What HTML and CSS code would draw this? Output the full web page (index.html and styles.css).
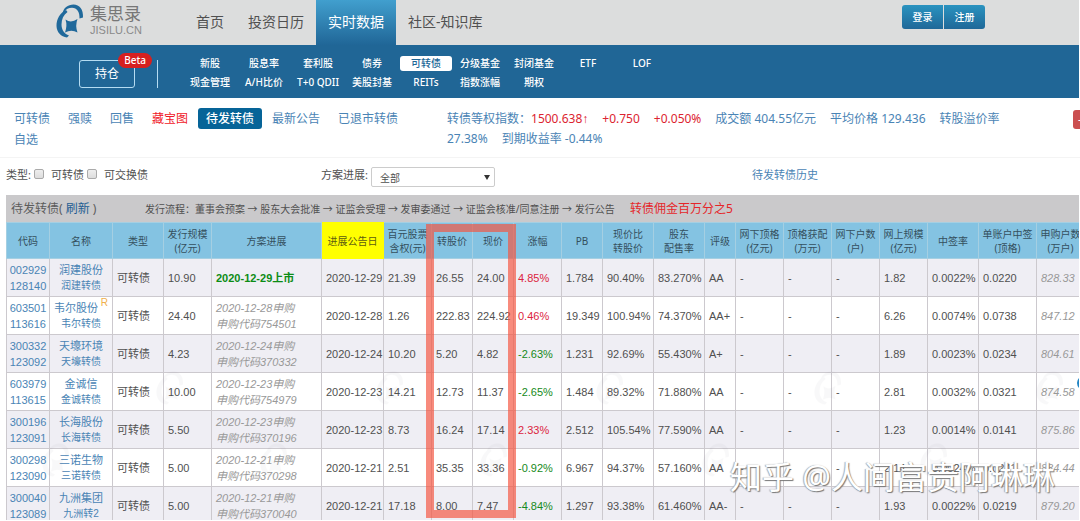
FILE: index.html
```html
<!DOCTYPE html>
<html lang="zh-CN">
<head>
<meta charset="utf-8">
<title>待发转债 - 集思录</title>
<link rel="stylesheet" href="styles.css">
</head>
<body>
<svg class="defs" width="0" height="0" aria-hidden="true">
  <symbol id="mark" viewBox="0 0 28 34">
    <path d="M6.500 10C7 4 12 .5 17.500 .5 23.500 .5 27.500 5.500 27 13.500L23.500 14.500C23.800 8 21 3.800 16 3.800 12.500 3.800 10 5 8.500 8z"/>
    <path d="M10 6C4 9 .3 15 .5 22 .7 28 5 33 11 33.500L13 31.500C8.500 30 5.500 26 5.500 20.500 5.500 15 7.500 11 11.500 8z"/>
    <path d="M9.500 15.500Q15 19.500 21.500 15Q19 21.500 21.500 28.500Q15.500 25 9 28.500Q11.500 21.500 9.500 15.500z"/>
  </symbol>
</svg>
<header class="top">
  <a class="brand" href="#">
    <svg class="brand-icon"><use href="#mark"/></svg>
    <span class="brand-text"><span class="brand-name">集思录</span><span class="brand-url">JISILU.CN</span></span>
  </a>
  <nav class="main-nav">
    <a href="#">首页</a><a href="#">投资日历</a><a href="#" class="current">实时数据</a><a href="#">社区-知识库</a>
  </nav>
  <div class="account"><button type="button">登录</button><button type="button">注册</button></div>
</header>
<div class="sub">
  <button type="button" class="hold">持仓<span class="beta">Beta</span></button>
  <nav class="sub-nav">
    <a href="#">新股</a><a href="#">股息率</a><a href="#">套利股</a><a href="#">债券</a><a href="#" class="current">可转债</a><a href="#">分级基金</a><a href="#">封闭基金</a><a href="#">ETF</a><a href="#">LOF</a>
    <a href="#">现金管理</a><a href="#">A/H比价</a><a href="#">T+0 QDII</a><a href="#">美股封基</a><a href="#">REITs</a><a href="#">指数涨幅</a><a href="#">期权</a>
  </nav>
</div>
<section class="info">
  <nav class="tabs">
    <a href="#">可转债</a><a href="#">强赎</a><a href="#">回售</a><a href="#" class="hot">藏宝图</a><a href="#" class="current">待发转债</a><a href="#">最新公告</a><a href="#">已退市转债</a><a href="#">自选</a>
  </nav>
  <p class="stats">
    <span>转债等权指数：<b>1500.638<i class="arrow">↑</i></b></span>
    <b>+0.750</b>
    <b>+0.050%</b>
    <span>成交额 404.55亿元</span>
    <span>平均价格 129.436</span>
    <span>转股溢价率</span>
    <span>27.38%</span>
    <span>到期收益率 -0.44%</span>
  </p>
  <button type="button" class="edge" aria-label="-">-</button>
</section>
<form class="filters">
  <div class="kinds">
    <span>类型:</span>
    <label><input type="checkbox">可转债</label>
    <label><input type="checkbox">可交换债</label>
  </div>
  <div class="progress">
    <label for="progress">方案进展:</label>
    <span class="select"><select id="progress"><option>全部</option></select></span>
  </div>
  <a href="#">待发转债历史</a>
</form>
<main class="board">
  <div class="caption">
    <span class="caption-title">待发转债( <a href="#">刷新</a> )</span>
    <span class="flow">发行流程：董事会预案 → 股东大会批准 → 证监会受理 → 发审委通过 → 证监会核准/同意注册 → 发行公告</span>
    <span class="promo">转债佣金百万分之5</span>
  </div>
  <table>
    <colgroup>
      <col class="w43"><col class="w63"><col class="w51"><col class="w48"><col class="w110"><col class="w62"><col class="w48"><col class="w41"><col class="w41"><col class="w48"><col class="w41"><col class="w51"><col class="w51"><col class="w31"><col class="w48"><col class="w48"><col class="w48"><col class="w48"><col class="w51"><col class="w58"><col class="w48">
    </colgroup>
    <thead>
      <tr><th>代码</th><th>名称</th><th>类型</th><th>发行规模<br>(亿元)</th><th>方案进展</th><th class="sorted">进展公告日</th><th>百元股票<br>含权(元)</th><th>转股价</th><th>现价</th><th>涨幅</th><th>PB</th><th>现价比<br>转股价</th><th>股东<br>配售率</th><th>评级</th><th>网下顶格<br>(亿元)</th><th>顶格获配<br>(万元)</th><th>网下户数<br>(户)</th><th>网上规模<br>(亿元)</th><th>中签率</th><th>单账户中签<br>(顶格)</th><th>申购户数<br>(万户)</th></tr>
    </thead>
    <tbody>
      <tr><td class="id"><a href="#">002929</a><a href="#">128140</a></td><td class="name"><a href="#">润建股份</a><a href="#">润建转债</a></td><td>可转债</td><td>10.90</td><td class="listed">2020-12-29上市</td><td>2020-12-29</td><td>21.39</td><td>26.55</td><td>24.00</td><td class="up">4.85%</td><td>1.784</td><td>90.40%</td><td>83.270%</td><td>AA</td><td>-</td><td>-</td><td>-</td><td>1.82</td><td>0.0022%</td><td>0.0220</td><td class="est">828.33</td></tr>
      <tr><td class="id"><a href="#">603501</a><a href="#">113616</a></td><td class="name"><a href="#">韦尔股份<sup>R</sup></a><a href="#">韦尔转债</a></td><td>可转债</td><td>24.40</td><td class="est">2020-12-28申购<br>申购代码754501</td><td>2020-12-28</td><td>1.26</td><td>222.83</td><td>224.92</td><td class="up">0.46%</td><td>19.349</td><td>100.94%</td><td>74.370%</td><td>AA+</td><td>-</td><td>-</td><td>-</td><td>6.26</td><td>0.0074%</td><td>0.0738</td><td class="est">847.12</td></tr>
      <tr><td class="id"><a href="#">300332</a><a href="#">123092</a></td><td class="name"><a href="#">天壕环境</a><a href="#">天壕转债</a></td><td>可转债</td><td>4.23</td><td class="est">2020-12-24申购<br>申购代码370332</td><td>2020-12-24</td><td>10.20</td><td>5.20</td><td>4.82</td><td class="down">-2.63%</td><td>1.231</td><td>92.69%</td><td>55.430%</td><td>A+</td><td>-</td><td>-</td><td>-</td><td>1.89</td><td>0.0023%</td><td>0.0234</td><td class="est">804.61</td></tr>
      <tr><td class="id"><a href="#">603979</a><a href="#">113615</a></td><td class="name"><a href="#">金诚信</a><a href="#">金诚转债</a></td><td>可转债</td><td>10.00</td><td class="est">2020-12-23申购<br>申购代码754979</td><td>2020-12-23</td><td>14.21</td><td>12.73</td><td>11.37</td><td class="down">-2.65%</td><td>1.484</td><td>89.32%</td><td>71.880%</td><td>AA</td><td>-</td><td>-</td><td>-</td><td>2.81</td><td>0.0032%</td><td>0.0321</td><td class="est">874.58</td></tr>
      <tr><td class="id"><a href="#">300196</a><a href="#">123091</a></td><td class="name"><a href="#">长海股份</a><a href="#">长海转债</a></td><td>可转债</td><td>5.50</td><td class="est">2020-12-23申购<br>申购代码370196</td><td>2020-12-23</td><td>8.73</td><td>16.24</td><td>17.14</td><td class="up">2.33%</td><td>2.512</td><td>105.54%</td><td>77.590%</td><td>AA</td><td>-</td><td>-</td><td>-</td><td>1.23</td><td>0.0014%</td><td>0.0141</td><td class="est">875.86</td></tr>
      <tr><td class="id"><a href="#">300298</a><a href="#">123090</a></td><td class="name"><a href="#">三诺生物</a><a href="#">三诺转债</a></td><td>可转债</td><td>5.00</td><td class="est">2020-12-21申购<br>申购代码370298</td><td>2020-12-21</td><td>2.51</td><td>35.35</td><td>33.36</td><td class="down">-0.92%</td><td>6.967</td><td>94.37%</td><td>57.160%</td><td>AA</td><td>-</td><td>-</td><td>-</td><td>2.14</td><td>0.0024%</td><td>0.0241</td><td class="est">884.44</td></tr>
      <tr><td class="id"><a href="#">300040</a><a href="#">123089</a></td><td class="name"><a href="#">九洲集团</a><a href="#">九洲转2</a></td><td>可转债</td><td>5.00</td><td class="est">2020-12-21申购<br>申购代码370040</td><td>2020-12-21</td><td>17.18</td><td>8.00</td><td>7.47</td><td class="down">-4.84%</td><td>1.297</td><td>93.38%</td><td>61.460%</td><td>AA-</td><td>-</td><td>-</td><td>-</td><td>1.93</td><td>0.0022%</td><td>0.0219</td><td class="est">879.20</td></tr>
    </tbody>
  </table>
  <svg class="ghosts" aria-hidden="true">
    <use href="#mark" x="150" y="176" width="28" height="34"/>
    <use href="#mark" x="370" y="176" width="28" height="34"/>
    <use href="#mark" x="590" y="176" width="28" height="34"/>
    <use href="#mark" x="808" y="176" width="28" height="34"/>
    <use href="#mark" x="1030" y="176" width="28" height="34"/>
    <use href="#mark" x="36" y="248" width="28" height="34"/>
    <use href="#mark" x="254" y="248" width="28" height="34"/>
    <use href="#mark" x="474" y="248" width="28" height="34"/>
    <use href="#mark" x="696" y="248" width="28" height="34"/>
    <use href="#mark" x="914" y="248" width="28" height="34"/>
  </svg>
  <div class="highlight"></div>
  <span class="float-dot"></span>
</main>
<div class="signature">知乎 @人间富贵阿琳琳</div>
</body>
</html>
```
FILE: styles.css
```css
* { box-sizing: border-box; }

body {
  margin: 0;
  height: 100vh;
  overflow: hidden;
  position: relative;
  background: #fff;
  color: #505050;
  font: 12px/20px "Noto Sans", "Noto Sans CJK SC", sans-serif;
}

a { color: #4a84b5; text-decoration: none; }
button, input, select { font: inherit; margin: 0; }
.defs { position: absolute; }

/* header */
.top {
  display: flex;
  height: 45px;
  margin-right: 1px;
  padding-left: 56px;
  background: #dcdddd;
}
.brand { display: flex; width: 126px; gap: 6px; padding-top: 4px; }
.brand-icon { width: 28px; height: 34px; fill: #20699b; }
.brand-text { display: flex; flex-direction: column; color: #777; }
.brand-name { font-size: 17px; line-height: 20px; }
.brand-url { font: 11px/13px "Liberation Sans", sans-serif; color: #8a8a8a; }
.main-nav { display: flex; font-size: 14px; line-height: 43px; }
.main-nav a { padding: 0 12px; color: #505050; }
.main-nav a:first-child { padding-left: 14px; }
.main-nav .current { color: #fff; background: linear-gradient(#419fce, #206697); }
.account { display: flex; gap: 1px; margin: 5px 94px 0 auto; }
.account button {
  width: 41px;
  height: 24px;
  padding: 0;
  border: 0;
  border-radius: 3px 0 0 3px;
  color: #fff;
  font-size: 10px;
  font-weight: 500;
  background: linear-gradient(#2a93c0, #1f6898);
}
.account button + button { border-radius: 0 3px 3px 0; }

/* secondary navigation */
.sub {
  display: flex;
  height: 53px;
  margin-right: 1px;
  padding: 9px 0 0 79px;
  background: #206696;
}
.hold {
  position: relative;
  width: 56px;
  height: 28px;
  margin-top: 6px;
  padding: 0;
  border: 1px solid #b5dcf2;
  border-radius: 3px;
  background: none;
  color: #fff;
}
.beta {
  position: absolute;
  top: -8px;
  right: -18px;
  padding: 0 6px;
  border-radius: 8px;
  background: #d6201f;
  font-size: 10px;
  font-weight: 500;
  line-height: 15px;
}
.sub-nav {
  display: grid;
  grid-template-columns: repeat(9, 54px);
  grid-auto-rows: 19px;
  margin-left: 48px;
  font-size: 10px;
  line-height: 15px;
  text-align: center;
  position: relative;
}
.sub-nav::before {
  content: "";
  position: absolute;
  left: -26px;
  top: 6px;
  height: 28px;
  border-left: 1px solid #b5dcf2;
}
.sub-nav a { color: #fff; height: 15px; margin: 2px 1px; white-space: nowrap; font-weight: 500; }
.sub-nav .current { background: #fff; color: #206696; border-radius: 3px; }

/* tabs and index figures */
.info {
  display: flex;
  align-items: flex-start;
  height: 60px;
  padding: 10px 0 0 6px;
  border-bottom: 1px solid #f4f4f4;
}
.tabs { display: flex; flex-wrap: wrap; column-gap: 2px; width: 441px; }
.tabs a { padding: 0 8px; line-height: 21px; border-radius: 3px; }
.tabs .hot { color: #f01828; }
.tabs .current { background: #066498; color: #fff; font-weight: 500; }
.stats {
  display: flex;
  flex-wrap: wrap;
  column-gap: 14px;
  flex: 1;
  margin: 1px 0 0;
  padding-right: 60px;
  color: #4a84b5;
}
.stats b { font-weight: 400; color: #dc2430; }
.arrow { font-family: "Liberation Sans", sans-serif; font-style: normal; }
.edge {
  width: 20px;
  height: 19px;
  margin: 2px -13px 0 0;
  padding: 0 5px;
  border: 0;
  border-radius: 3px;
  background: #cb4f50;
  color: #fff;
  line-height: 19px;
  text-align: left;
}

/* filters */
.filters {
  display: flex;
  height: 37px;
  padding: 7px 0 0 6px;
  font-size: 11px;
}
.kinds { display: flex; width: 315px; gap: 3px; }
.kinds label { display: flex; }
.kinds input {
  appearance: none;
  width: 10px;
  height: 10px;
  margin: 4px 7px 0 0;
  border: 1px solid #aaa;
  border-radius: 2px;
  background: linear-gradient(#eee, #ddd);
}
.progress { display: flex; width: 431px; gap: 3px; }
.select { position: relative; height: 21px; margin-top: 2px; }
.select::after {
  content: "";
  position: absolute;
  right: 5px;
  top: 8px;
  border: 3px solid transparent;
  border-top: 5px solid #333;
  border-bottom: 0;
}
.select select {
  appearance: none;
  display: block;
  width: 124px;
  height: 20px;
  padding: 0 8px;
  border: 1px solid #ccc;
  border-radius: 2px;
  background: #fff;
  color: #505050;
  font-size: 10px;
}

/* bond table */
.board { position: relative; margin: 0 1px 0 6px; height: 325px; overflow: hidden; }
.caption {
  display: flex;
  align-items: center;
  height: 27px;
  padding-left: 5px;
  background: #cac9cb;
  white-space: nowrap;
}
.caption-title { width: 134px; color: #5c5c5c; }
.caption a { color: #1f5d92; }
.flow { width: 485px; font-size: 10px; }
.promo { color: #e52629; }

table { width: 100%; table-layout: fixed; border-collapse: collapse; }
.w31 { width: 31px; }
.w41 { width: 41px; }
.w43 { width: 43px; }
.w48 { width: 48px; }
.w51 { width: 51px; }
.w58 { width: 58px; }
.w62 { width: 62px; }
.w63 { width: 63px; }
.w110 { width: 110px; }
th {
  height: 36px;
  padding: 0;
  border: 1px solid #a5cfe2;
  background: #84c3e2;
  color: #34505e;
  font-size: 10px;
  font-weight: 400;
  line-height: 14px;
  white-space: nowrap;
}
th.sorted { background: #ff0; border-color: #ff0; color: #5c5c10; }
td {
  height: 38px;
  padding: 0 0 0 4px;
  border: 1px solid #ccc9ce;
  font: 11px/16px "Liberation Sans", "Noto Sans CJK SC", sans-serif;
  white-space: nowrap;
}
tbody tr:nth-child(odd) { background: #efeef4; }
td a { display: block; }
.id, .name { padding: 0; text-align: center; }
.name { position: relative; }
.name a + a { font-size: 10px; }
.name sup { position: absolute; right: 4px; top: -1px; color: #f0b04c; font-size: 10px; line-height: 14px; }
.name a:has(sup) { padding-right: 10px; }
.listed { color: #0c8c14; font-weight: 700; }
.est { color: #999; font-style: italic; }
.up { color: #dc2440; }
.down { color: #168a20; }

.ghosts {
  position: absolute;
  inset: 0;
  width: 100%;
  height: 100%;
  fill: #667;
  opacity: 0.04;
  pointer-events: none;
}
.highlight {
  position: absolute;
  left: 420px;
  top: 29px;
  width: 90px;
  height: 294px;
  border: 8px solid rgba(244, 84, 64, 0.68);
}
.float-dot {
  position: absolute;
  right: -12px;
  top: 181px;
  width: 14px;
  height: 14px;
  border-radius: 50%;
  background: #2385c4;
}
.signature {
  position: absolute;
  right: 25px;
  bottom: 21px;
  color: #fff;
  font-size: 32px;
  line-height: 46px;
  white-space: nowrap;
  text-shadow: 1px 1px 1px #777, -1px 0 1px #aaa;
}
```
